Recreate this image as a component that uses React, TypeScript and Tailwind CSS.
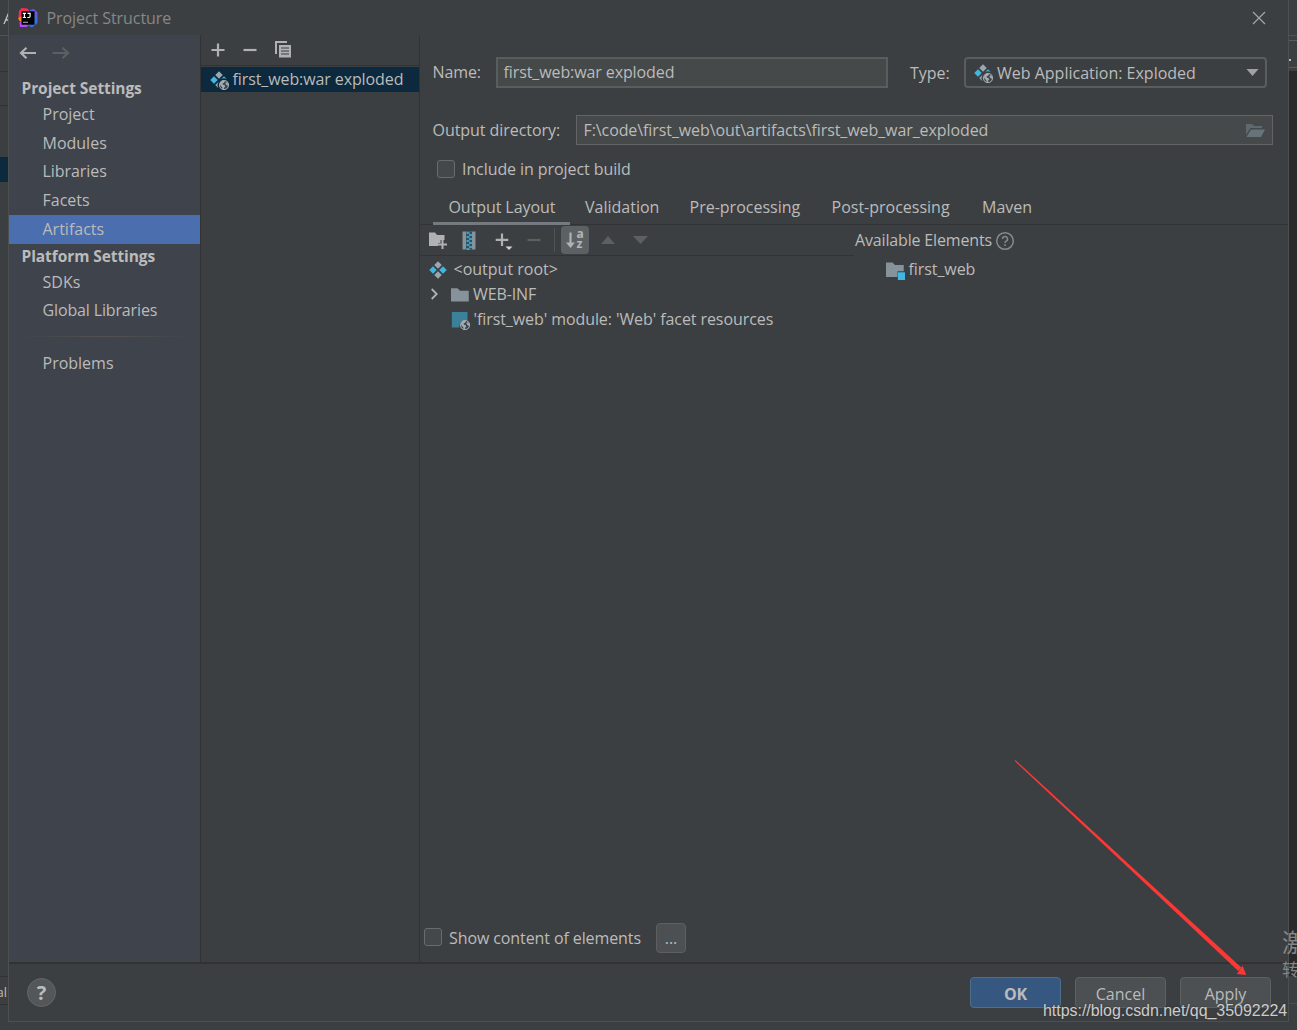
import type { ReactNode } from "react";

const NAV_TOP = [
  { label: "Project", size: "h-[29px]" },
  { label: "Modules", size: "h-[29px]" },
  { label: "Libraries", size: "h-[28px] tracking-[-0.06px]" },
  { label: "Facets", size: "h-[29px]" },
  { label: "Artifacts", size: "h-[29px]", active: true },
];

function Diamonds({ web = false }: { web?: boolean }) {
  return (
    <svg className="size-5 shrink-0" viewBox="0 0 16 16">
      <path d="M8 1l3 3-3 3-3-3z" fill="#9aa7b0" />
      <path d="M4 5l3 3-3 3-3-3z" fill="#40b6e0" />
      {web ? (
        <>
          <path d="M12 5l2.200 2.200A5 5 0 0 0 9.600 7.400z" fill="#40b6e0" />
          <path d="M7.900 9.100A5 5 0 0 0 7.500 14.500L5 12z" fill="#9aa7b0" />
          <Globe />
        </>
      ) : (
        <>
          <path d="M12 5l3 3-3 3-3-3z" fill="#40b6e0" />
          <path d="M8 9l3 3-3 3-3-3z" fill="#9aa7b0" />
        </>
      )}
    </svg>
  );
}

function Globe() {
  return (
    <g>
      <circle cx="12" cy="12" r="3.600" fill="#3c4347" stroke="#a3adb5" strokeWidth=".9" />
      <path d="M8.600 11.200c.4-1.600 1.600-2.700 3.200-2.800l1 .7-.9 1.200-1 .3.200 1.100 1.300.3.600 1-.9 1.100-.4 1.600-.8-.2-.3-1.700-1-1z" fill="#a3adb5" />
      <path d="M13.600 9.800l1.200.3.700 1.600-.6.8-1.200-.7-.6-1z" fill="#a3adb5" />
    </g>
  );
}

function Folder() {
  return (
    <svg className="size-5 shrink-0" viewBox="0 0 16 16">
      <path d="M.8 2.600h5.200l2 2h7v8.600H.8z" fill="#87939a" />
    </svg>
  );
}

function NavItem({ label, size, active }: { label: string; size: string; active?: boolean }) {
  return (
    <div className={`flex items-center pb-[2px] pl-[33.5px] ${size} ${active ? "bg-[#4b6eaf]" : ""}`}>{label}</div>
  );
}

function Heading({ children }: { children: ReactNode }) {
  return (
    <div className="flex h-6 items-center pl-[12.5px] text-[15.5px] font-bold tracking-[-0.08px]">{children}</div>
  );
}

function Sidebar() {
  return (
    <div className="w-[191px] bg-[#3f434c]">
      <div className="flex h-[41px] items-start gap-[15px] pl-[9.5px] pt-[9px]">
        <svg className="h-[18px] w-[18px]" viewBox="0 0 18 18" fill="none" stroke="#afb1b3" strokeWidth="2.200">
          <path d="M17 9H2M7.500 3.700L2 9l5.500 5.300" />
        </svg>
        <svg className="h-[18px] w-[18px]" viewBox="0 0 18 18" fill="none" stroke="#5d5f62" strokeWidth="2.200">
          <path d="M.5 9H16M10.500 3.700L16 9l-5.500 5.300" />
        </svg>
      </div>
      <Heading>Project Settings</Heading>
      {NAV_TOP.map((n) => (
        <NavItem key={n.label} {...n} />
      ))}
      <Heading>Platform Settings</Heading>
      <NavItem label="SDKs" size="h-[29px]" />
      <NavItem label="Global Libraries" size="h-[28px] tracking-[-0.14px]" />
      <div className="mx-[10px] mt-[11px] h-px bg-gradient-to-r from-transparent via-[#54524f] to-transparent" />
      <NavItem label="Problems" size="h-[29px] mt-[12px]" />
    </div>
  );
}

function ArtifactList() {
  return (
    <div className="w-[220px] border-x border-[#323232]">
      <div className="flex h-[31px] items-center border-b border-[#323335] pl-[10px]">
        <svg className="h-[14px] w-[14px]" viewBox="0 0 14 14" stroke="#afb1b3" strokeWidth="2.200">
          <path d="M7 .5v13M.5 7h13" />
        </svg>
        <svg className="ml-[18px] h-[14px] w-[14px]" viewBox="0 0 14 14" stroke="#afb1b3" strokeWidth="2.200">
          <path d="M.5 7h13" />
        </svg>
        <svg className="mb-px ml-[18px] h-[17px] w-[17px]" viewBox="0 0 17 17">
          <path d="M1 13V1h11" fill="none" stroke="#afb1b3" strokeWidth="2" />
          <path d="M4 4h12v12.500H4z" fill="#afb1b3" />
          <path d="M6 7h8M6 10h8M6 13h8" stroke="#3c3f41" strokeWidth="1.200" />
        </svg>
      </div>
      <div className="mt-px flex h-[25px] items-center bg-[#0d293e] pl-[8px]">
        <Diamonds web />
        <span className="ml-[3.5px] pb-[2px] tracking-[-0.1px]">first_web:war exploded</span>
      </div>
    </div>
  );
}

function Checkbox() {
  return <div className="size-[18px] shrink-0 rounded-[3px] border border-[#6b6b6b] bg-[#43494a]" />;
}

const TABS = [
  { label: "Output Layout", cls: "ml-[13px] w-[137px] pl-[15.5px] tracking-[-0.08px] border-b-[3px] border-[#747a80]" },
  { label: "Validation", cls: "w-[105px] pl-[15px] pb-[3px]" },
  { label: "Pre-processing", cls: "w-[142px] pl-[14.5px] pb-[3px]" },
  { label: "Post-processing", cls: "w-[150px] pl-[14.5px] pb-[3px]" },
  { label: "Maven", cls: "pl-[15px] pb-[3px]" },
];

function Toolbar() {
  return (
    <div className="flex h-[31px] w-[434px] items-center border-b border-[#323335] pl-[8px]">
      <svg className="h-[18px] w-[20px]" viewBox="0 0 20 18">
        <path d="M1 1.500h6l2 2.500h7.500V9h-4v3H10v3H1z" fill="#afb1b3" />
        <path d="M14.500 9v9M10 13.500h9" stroke="#afb1b3" strokeWidth="2" />
      </svg>
      <svg className="ml-[13px] h-[19px] w-[16px]" viewBox="0 0 16 19">
        <path d="M1.500 .5H14.500v18H1.500z" fill="#87939a" />
        <path d="M5 .5h6v18H5z" fill="#33505c" />
        <path d="M5.500 2h3M8 4h3M5.500 6h3M8 8h3M5.500 10h3M8 12h3M5.500 14h3M8 16h3M5.500 18h3" stroke="#40b6e0" strokeWidth="1.300" />
      </svg>
      <svg className="ml-[18px] h-[20px] w-[20px]" viewBox="0 0 20 20">
        <path d="M7 3.500v12.500M.7 9.800h12.600" stroke="#afb1b3" strokeWidth="2.200" />
        <path d="M10.500 16.500h7l-3.500 3.500z" fill="#d2d2d2" />
      </svg>
      <svg className="ml-[12px] h-[14px] w-[14px]" viewBox="0 0 14 14">
        <path d="M.5 7h13" stroke="#5d5f60" strokeWidth="2.200" />
      </svg>
      <div className="ml-[13px] h-6 w-px bg-[#515355]" />
      <div className="ml-[6px] flex h-[28px] w-[28px] items-center justify-center rounded-[4px] bg-[#5c6164] pr-px">
        <svg className="h-[20px] w-[10px]" viewBox="0 0 10 20">
          <path d="M5.500 2.500v12" stroke="#afb1b3" strokeWidth="2.200" />
          <path d="M1 12.500h9l-4.500 5.500z" fill="#afb1b3" />
        </svg>
        <div className="ml-[1px] flex flex-col pb-[3px] text-[12px] leading-[10px] font-bold text-[#b4b6b8]">
          <span>a</span>
          <span>z</span>
        </div>
      </div>
      <svg className="ml-[12px] h-[8px] w-[14px]" viewBox="0 0 14 8">
        <path d="M0 8L7 0l7 8z" fill="#5d5f60" />
      </svg>
      <svg className="ml-[18px] h-[8px] w-[15px]" viewBox="0 0 15 8">
        <path d="M0 0h15L7.500 8z" fill="#5d5f60" />
      </svg>
    </div>
  );
}

function OutputTree() {
  return (
    <div className="pt-px">
      <div className="flex h-[25px] items-center pl-[8px]">
        <Diamonds />
        <span className="ml-[5.500px] pb-px">&lt;output root&gt;</span>
      </div>
      <div className="flex h-[25px] items-center pl-[10px]">
        <svg className="mb-px h-[12px] w-[9px]" viewBox="0 0 9 12" fill="none" stroke="#afb1b3" strokeWidth="1.800">
          <path d="M1.700 1l5 5-5 5" />
        </svg>
        <span className="ml-[11px] flex"><Folder /></span>
        <span className="ml-[3px] pb-px tracking-[-0.1px]">WEB-INF</span>
      </div>
      <div className="flex h-[25px] items-center pl-[30px]">
        <svg className="mt-px size-5 shrink-0" viewBox="0 0 16 16">
          <path d="M1.500 1.500H14v6.700A5 5 0 0 0 7.600 14H1.500z" fill="#3b8199" />
          <Globe />
        </svg>
        <span className="ml-[3.500px] pb-px tracking-[-0.08px]">'first_web' module: 'Web' facet resources</span>
      </div>
    </div>
  );
}

function Editor() {
  return (
    <div className="flex flex-1 flex-col">
      <div className="flex h-[53px] items-end">
        <span className="mb-[5px] ml-[12.500px] w-[63.500px] tracking-[-0.1px]">Name:</span>
        <div className="flex h-[31px] w-[392px] items-center border-2 border-[#5a5d5e] bg-[#45494a] pb-px pl-[5.500px] tracking-[-0.1px]">
          first_web:war exploded
        </div>
        <span className="mb-[4px] ml-[22px] w-[54px]">Type:</span>
        <div className="flex h-[31px] w-[303px] items-center rounded-[4px] border-2 border-[#5a5d5e] bg-[#3c3f41] pl-[7px] pr-[6px]">
          <Diamonds web />
          <span className="ml-[4px] flex-1">Web Application: Exploded</span>
          <svg className="h-[7px] w-[13px]" viewBox="0 0 13 7">
            <path d="M.5 0h12L6.500 7z" fill="#9fa1a3" />
          </svg>
        </div>
      </div>
      <div className="mt-[27px] flex h-[30px] items-center">
        <span className="ml-[12.500px] w-[143.500px] pb-px tracking-[-0.05px]">Output directory:</span>
        <div className="flex h-[30px] w-[697px] items-center border border-[#646464] bg-[#45494a] pl-[6.500px] pr-[7px]">
          <span className="flex-1 pb-px tracking-[-0.09px]">F:\code\first_web\out\artifacts\first_web_war_exploded</span>
          <svg className="mt-px h-[15px] w-[20px]" viewBox="0 0 20 15">
            <path d="M1 1h6l2 2h8v2H5.500L1 12z" fill="#5e6a70" />
            <path d="M6 6.500h14L16 14H1.500z" fill="#66737a" />
          </svg>
        </div>
      </div>
      <div className="mt-[11px] flex h-[26px] items-center pl-[16.500px]">
        <Checkbox />
        <span className="ml-[7.500px] tracking-[-0.08px]">Include in project build</span>
      </div>
      <div className="mt-[9px] flex h-[34px] border-b border-[#323335]">
        {TABS.map((t) => (
          <div key={t.label} className={`flex h-[34px] items-center pt-px ${t.cls}`}>{t.label}</div>
        ))}
      </div>
      <div className="flex flex-1">
        <div className="flex w-[434px] flex-col">
          <Toolbar />
          <OutputTree />
        </div>
        <div className="flex-1">
          <div className="flex h-[31px] items-center pb-[2px] pl-[1px]">
            <span className="tracking-[-0.16px]">Available Elements</span>
            <svg className="mt-[2px] ml-[3px] h-[20px] w-[20px]" viewBox="0 0 20 20" fill="none" stroke="#858b8f" strokeWidth="1.500">
              <circle cx="10" cy="10" r="8.300" />
              <path d="M7.500 8a2.500 2.500 0 1 1 3.600 2.200c-.8.4-1.100.8-1.100 1.700M10 13.200v1.700" />
            </svg>
          </div>
          <div className="mt-px flex h-[25px] items-center pl-[31px]">
            <svg className="size-5" viewBox="0 0 16 16">
              <path d="M.8 2h5.200l2 2h7v5H10v4.500H.8z" fill="#87939a" />
              <path d="M10.300 9.800H16V16h-5.700z" fill="#40b6e0" />
            </svg>
            <span className="ml-[3.500px] pb-px tracking-[-0.08px]">first_web</span>
          </div>
        </div>
      </div>
      <div className="mb-[9px] flex h-[31px] items-center pl-[3.500px]">
        <div className="pb-px"><Checkbox /></div>
        <span className="ml-[7.500px] w-[207px] tracking-[-0.1px]">Show content of elements</span>
        <div className="flex h-[30px] w-[30px] items-center justify-center rounded-[4px] border border-[#5e6060] bg-[#4c5052]">...</div>
      </div>
    </div>
  );
}

function DialogButton({ children, primary }: { children: ReactNode; primary?: boolean }) {
  return (
    <div
      className={`flex h-[31px] w-[91px] items-center justify-center rounded-[4px] border pt-[2px] ${
        primary ? "border-[#4c708c] bg-[#365880] font-bold tracking-[-0.3px]" : "border-[#5e6060] bg-[#4c5052]"
      }`}
    >
      {children}
    </div>
  );
}

function ProductLogo() {
  return (
    <svg className="h-[20px] w-[20px]" viewBox="0 0 20 20">
      <path d="M1 3L3.500 0l6 .5L12 4v6L4 14 .5 9z" fill="#fe2857" />
      <path d="M0 10l4-2v6.500L1.500 13z" fill="#fc801d" />
      <path d="M1.500 14.500L4 13l6 4-1 2-7 0z" fill="#b74af7" />
      <path d="M12 2l3.500-1L19.500 4.500v10.500L14 19.500 9 17z" fill="#3070e8" />
      <path d="M13 2.500l2.500-1.500L19 4v7l-3-3z" fill="#6b57e0" />
      <path d="M3.500 3.300h13v13.400h-13z" fill="#000" />
      <path d="M4.800 5.300h3.200M6.400 5.300v4.200M4.800 9.500h3.200M9.500 5.300h2.600V8.300c0 .9-.5 1.200-1.200 1.200H9.300" fill="none" stroke="#fff" strokeWidth="1.200" />
      <path d="M5 14.300h5" stroke="#999" strokeWidth="1.200" />
    </svg>
  );
}

export default function App() {
  return (
    <div className="relative flex h-[1030px] w-[1297px] flex-col overflow-hidden bg-[#3c3f41] font-['Open_Sans','Noto_Sans',sans-serif] text-[16px] leading-[22px] whitespace-nowrap text-[#bbbbbb]">
      <div className="flex h-[1022px]">
        <div className="flex w-[8px] shrink-0 flex-col overflow-hidden">
          <div className="h-[36px] border-b border-[#515355] pt-[8px]">
            <svg className="h-[20px] w-[8px]" viewBox="0 0 8 20" stroke="#c4c4c4" strokeWidth="1.300">
              <path d="M4 16L9 4M6 12h2" />
            </svg>
          </div>
          <div className="h-[36px] border-b border-[#323232]" />
          <div className="h-[34px] border-b border-[#323232]" />
          <div className="mt-[51px] h-[25px] bg-[#0d293e]" />
          <div className="mt-[794px] flex h-[29px] items-center justify-end border-y border-[#323232] pt-[3px] pr-[1px] text-[13px]">al</div>
        </div>
        <div className="flex w-[1281px] shrink-0 flex-col border-x border-b border-[#4d5051]">
          <div className="flex h-[35px] items-center justify-between pl-[9px] pr-[22px] pt-[1px]">
            <div className="flex items-center gap-[8.500px] text-[#868788]">
              <ProductLogo />
              <span className="tracking-[-0.07px]">Project Structure</span>
            </div>
            <svg className="h-[14px] w-[14px]" viewBox="0 0 14 14" stroke="#a5a6a7" strokeWidth="1.200">
              <path d="M1 1l12 12M13 1L1 13" />
            </svg>
          </div>
          <div className="flex h-[927px]">
            <Sidebar />
            <ArtifactList />
            <Editor />
          </div>
          <div className="flex flex-1 items-start border-t-2 border-[#323232] pt-[13px] pl-[18px] pr-[17px]">
            <div className="mt-px flex size-[29px] items-center justify-center rounded-full border border-[#646768] bg-[#53575a] text-[20px] font-bold text-[#babcbd]">?</div>
            <div className="ml-auto flex gap-[14px]">
              <DialogButton primary>OK</DialogButton>
              <DialogButton>Cancel</DialogButton>
              <DialogButton>Apply</DialogButton>
            </div>
          </div>
        </div>
        <div className="flex w-[8px] shrink-0 flex-col">
          <div className="h-[36px] border-b border-[#515355]" />
          <div className="mt-[4px] flex h-[28px] items-end border-y border-[#5a5d5f] pb-[6px]">
            <div className="size-[2px] bg-[#bbbbbb]" />
          </div>
          <div className="h-[3px]" />
          <div className="h-[905px] bg-[#2a2a2a]" />
          <div className="h-[28px] border-b border-[#4b4e50]" />
        </div>
      </div>

      <div className="absolute top-[928px] left-[1282px] w-[15px] overflow-hidden font-['Noto_Sans_CJK_SC',sans-serif] text-[#858585]">
        <div className="text-[25px] leading-[27px]">激</div>
        <div className="text-[17px] leading-[27px]">转</div>
      </div>
      <svg className="absolute top-[755px] left-[1010px] h-[225px] w-[240px]" viewBox="1010 755 240 225">
        <path d="M1014.700 761l.8-.8L1241.300 967.500l-3 3.500z" fill="#fb3836" />
        <path d="M1015.200 760.600L1120 856.500" stroke="#fb3836" strokeWidth=".8" />
        <path d="M1242.500 965.700L1246.300 975l-9.500-1z" fill="#fb3836" />
      </svg>
      <div className="absolute top-[1000px] left-[1043px] font-['Liberation_Sans',sans-serif] tracking-[-0.04px] text-[#cccccc] [text-shadow:0_0_2px_#333]">
        https://blog.csdn.net/qq_35092224
      </div>
    </div>
  );
}
